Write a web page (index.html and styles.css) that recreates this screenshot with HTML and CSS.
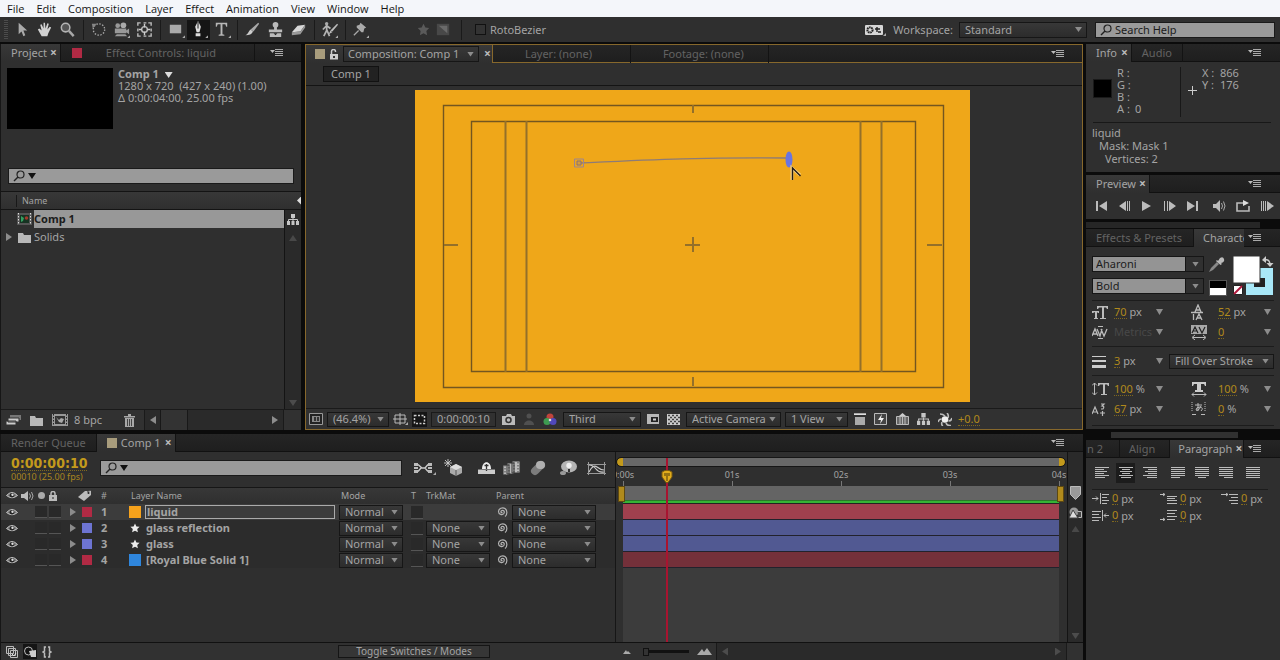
FILE: index.html
```html
<!DOCTYPE html>
<html lang="en">
<head>
<meta charset="utf-8">
<title>Comp 1</title>
<link rel="stylesheet" href="styles.css">
</head>
<body>
<svg class="defs" aria-hidden="true">
  <symbol id="menu" viewBox="0 0 14 8"><path d="M0 1h5L2.500 4z" fill="#bbb"/><path d="M5 .5h8M5 2.500h8M5 4.500h8M5 6.500h8" stroke="#aaa"/></symbol>
  <symbol id="lens" viewBox="0 0 12 12"><circle cx="7.500" cy="4.500" r="3.500" fill="none" stroke="#222" stroke-width="1.200"/><path d="M5 7L1 11" stroke="#222" stroke-width="1.500"/></symbol>
  <symbol id="eye" viewBox="0 0 12 9"><path d="M.5 4.500Q6-1.500 11.500 4.500Q6 9 .5 4.500z" fill="#777" stroke="#c4c4c4"/><circle cx="6" cy="4.300" r="2.300" fill="#222"/><circle cx="6.500" cy="3.800" r="1.200" fill="#ddd"/></symbol>
  <symbol id="star" viewBox="0 0 10 10"><path d="M5 .5l1.400 2.900 3.200.4-2.400 2.200.7 3.300L5 7.700 2.100 9.300l.7-3.300L.4 3.800l3.200-.4z" fill="#ececec"/></symbol>
  <symbol id="swirl" viewBox="0 0 12 12"><path d="M6.500 6.500c-1 .7-2.300-.7-1-1.800C7 3.500 9 5.200 8 7.200 6.500 9.600 2.500 8.600 2.500 5.600 2.500 2.500 6.500.8 9 2.500c2.500 1.800 2.500 6 0 8" fill="none" stroke="#b4b4b4" stroke-width="1.200"/></symbol>
  <symbol id="flow" viewBox="0 0 12 11"><path d="M4 0h4v4H4zM0 7h3v4H0zM4.500 7h3v4h-3zM9 7h3v4H9z" fill="#c6c6c6"/><path d="M6 4v3M1.500 7V5.500h9V7" fill="none" stroke="#c6c6c6"/></symbol>
  <symbol id="tip" viewBox="0 0 4 4"><path d="M4 0v4H0z" fill="#aaa"/></symbol>
  <symbol id="folder" viewBox="0 0 13 11"><path d="M0 1h5l1 2h7v8H0z" fill="#b8b8b8"/></symbol>
</svg>

<nav class="menubar">
  <button>File</button><button>Edit</button><button>Composition</button><button>Layer</button><button>Effect</button><button>Animation</button><button>View</button><button>Window</button><button>Help</button>
</nav>

<header class="toolbar">
  <i class="handle"></i>
  <div class="tools">
    <button aria-label="Selection"><svg viewBox="0 0 20 20"><path d="M7 3v12l3-3 2 5 2-1-2-5h4z" fill="#aaa"/></svg></button>
    <button aria-label="Hand"><svg viewBox="0 0 20 20"><path d="M7 17L3 10l1.500-1L7 11 5.500 5 7 4.500 9 9 9 3h1.500L11 9l2-5.500 1.500.5-1.500 6 2.500-3 1.500 1-3 6-1 3z" fill="#d2d2d2"/></svg></button>
    <button aria-label="Zoom"><svg viewBox="0 0 20 20"><circle cx="8" cy="8" r="4.500" fill="#555" stroke="#b4b4b4" stroke-width="1.600"/><path d="M11.500 11.500L16.500 17" stroke="#a8a8a8" stroke-width="2.600"/></svg></button>
  </div>
  <div class="tools">
    <button aria-label="Rotation"><svg viewBox="0 0 20 20"><circle cx="10.500" cy="10" r="6" fill="none" stroke="#aaa" stroke-width="1.400" stroke-dasharray="1.500 1.600"/><path d="M3 4l5 0-4 5z" fill="#888"/></svg></button>
    <button aria-label="Camera"><svg viewBox="0 0 20 20"><circle cx="6" cy="6" r="2.500" fill="#999"/><circle cx="12" cy="5.500" r="3" fill="#aaa"/><path d="M3 9h12v5H3zM15 11l3-2v6l-3-2zM5 15h9l2 2H3z" fill="#999"/><use href="#tip" x="16" y="16" width="3" height="3"/></svg></button>
    <button aria-label="Pan Behind"><svg viewBox="0 0 20 20"><path d="M3 6V3h3M9 3h3M14 3h3v3M17 9v3M17 14v3h-3M12 17H9M6 17H3v-3M3 12V9" fill="none" stroke="#bbb" stroke-width="1.500"/><circle cx="10" cy="10" r="3" fill="none" stroke="#bbb" stroke-width="1.500"/><path d="M10 4v4M10 12v4M4 10h3M13 10h3" stroke="#ccc" stroke-width="1.500"/></svg></button>
  </div>
  <div class="tools">
    <button aria-label="Rectangle"><svg viewBox="0 0 20 20"><path d="M4 5h12v9H4z" fill="#aaa"/><use href="#tip" x="17" y="16" width="3" height="3"/></svg></button>
    <button class="on" aria-label="Pen"><svg viewBox="0 0 20 20"><path d="M9.500 1l3 6-1.500 6H8L6.500 7zM7 14h5v3H7z" fill="#ddd"/><path d="M9.500 2v7" stroke="#111"/><use href="#tip" x="17" y="16" width="3" height="3"/></svg></button>
    <button aria-label="Type"><svg viewBox="0 0 20 20"><path d="M4 3h12v4h-1l-1-2.500h-3V15l2 .5v1H7v-1l2-.5V4.500H6L5 7H4z" fill="#b8b8b8"/><use href="#tip" x="17" y="16" width="3" height="3"/></svg></button>
  </div>
  <div class="tools">
    <button aria-label="Brush"><svg viewBox="0 0 20 20"><path d="M16 3l1 1-6 8-3-2z" fill="#aaa"/><path d="M8 10l2.500 2c-1 3-4 4-8 4 3-1 3-4 5.500-6z" fill="#ccc"/></svg></button>
    <button aria-label="Clone Stamp"><svg viewBox="0 0 20 20"><circle cx="10" cy="5" r="3" fill="#bbb"/><path d="M8.500 6h3v4H17v3H3v-3h5.500zM4 14h12v4H4z" fill="#bbb"/><path d="M8 14l2 2 2-2z" fill="#222"/></svg></button>
    <button aria-label="Eraser"><svg viewBox="0 0 20 20"><path d="M9 6l8-1-5 7-9 1z" fill="#d8d8d8"/><path d="M3 13l9-1v3l-9 1zM12 12l5-7v3l-5 7z" fill="#999"/></svg></button>
  </div>
  <div class="tools">
    <button aria-label="Roto Brush"><svg viewBox="0 0 20 20"><circle cx="7" cy="4" r="1.800" fill="#aaa"/><path d="M7 6v5l-3 6M7 10l3 7M3 10l4-4 4 3" fill="none" stroke="#b4b4b4" stroke-width="1.800"/><path d="M18 4l1 1-6 7-2-1zM11 11l2 2-4 2z" fill="#bbb"/><use href="#tip" x="16" y="16" width="3" height="3"/></svg></button>
  </div>
  <div class="tools pin">
    <button aria-label="Puppet Pin"><svg viewBox="0 0 20 20"><path d="M10 3l6 5-2 1-1 4-2 0-5-5 0-2 3-1z" fill="#aaa"/><path d="M8 11l-5 5" stroke="#aaa" stroke-width="1.300"/><use href="#tip" x="16" y="16" width="3" height="3"/></svg></button>
  </div>
  <div class="tools dim">
    <button aria-label="Shape"><svg viewBox="0 0 20 20"><path d="M10 4l2 4 4 .5-3 3 .8 4.500-3.800-2-3.800 2 .8-4.500-3-3L8 8z" fill="#5a5a5a"/></svg></button>
    <button aria-label="Mask"><svg viewBox="0 0 20 20"><path d="M3 4h13v12H3z" fill="#484848"/><path d="M5 6h9v8z" fill="#6a6a6a"/></svg></button>
  </div>
  <label class="check"><input type="checkbox">RotoBezier</label>
  <span class="grow"></span>
  <svg class="gearbox" width="21" height="12" viewBox="0 0 21 12"><rect width="18" height="10" y="1" rx="1" fill="#d6d6d6"/><circle cx="5" cy="6" r="2.600" fill="none" stroke="#222" stroke-width="2" stroke-dasharray="1.600 .6"/><path d="M10 5h5M12 3v5M13 8h3" stroke="#222" stroke-width="1.400"/><use href="#tip" x="18" y="9" width="3" height="3"/></svg>
  <label for="ws">Workspace:</label>
  <span class="sel ws"><select id="ws"><option>Standard</option></select></span>
  <label class="field help"><svg width="12" height="12"><use href="#lens"/></svg><input type="search" placeholder="Search Help" aria-label="Search Help"></label>
</header>

<main class="desk">
  <div class="main">
    <div class="upper">
      <section class="panel project">
        <div class="tabs">
          <button class="tab on">Project <b>×</b></button>
          <button class="tab effects"><i class="chip red"></i>Effect Controls: liquid</button>
          <button class="pmenu" aria-label="Panel menu"><svg width="14" height="8"><use href="#menu"/></svg></button>
        </div>
        <div class="preview">
          <div class="thumb"></div>
          <p><strong>Comp 1 <i class="down light"></i></strong><br>1280 x 720 &nbsp;(427 x 240) (1.00)<br>Δ 0:00:04:00, 25.00 fps</p>
        </div>
        <label class="field find"><svg width="12" height="12"><use href="#lens"/></svg><i class="down dark"></i><input type="search" aria-label="Search project"></label>
        <div class="colhead"><span>Name</span><i class="left light"></i></div>
        <div class="files">
          <div class="list">
            <button class="file on"><span class="pre"></span><svg width="16" height="12"><path d="M0 0h15v12H0z" fill="#555"/><path d="M1.500 0v12M13.500 0v12" stroke="#ddd" stroke-dasharray="1.500 1.500"/><path d="M3 2h9v8H3z" fill="#163322"/><path d="M4 3l3 2-1 3-2 1z" fill="#35a060"/><circle cx="9.500" cy="5" r="1.800" fill="#a33a2c"/></svg><span class="fname">Comp 1</span></button>
            <button class="file"><span class="pre"><i class="right"></i></span><svg width="13" height="11"><use href="#folder"/></svg><span class="fname">Solids</span></button>
          </div>
          <div class="vbar"><svg width="12" height="11"><use href="#flow"/></svg><i class="up"></i><span class="grow"></span><i class="down faint"></i></div>
        </div>
        <div class="foot pfoot">
          <button aria-label="Interpret footage"><svg width="15" height="12"><path d="M4 1h11v5H4z" fill="#777"/><path d="M2 4h11v4H2zM0 7h10v4H0z" fill="#ccc" stroke="#333"/></svg></button>
          <button aria-label="New folder"><svg width="13" height="11"><use href="#folder"/></svg></button>
          <button aria-label="New composition"><svg width="16" height="12"><path d="M0 0h16v12H0z" fill="#999"/><path d="M1.500 0v12M14.500 0v12" stroke="#222" stroke-dasharray="1.500 1.500"/><path d="M3 2h10v8H3z" fill="#333"/><path d="M4 3l3 3 2-2 3 1-2 4-3-1z" fill="#aaa"/></svg></button>
          <button class="bpc">8 bpc</button>
          <button aria-label="Delete"><svg width="11" height="13"><path d="M0 2h11v1.500H0zM4 0h3v2H4zM1 4h9v9H1z" fill="#a8a8a8"/><path d="M3.500 5v7M5.500 5v7M7.500 5v7" stroke="#444"/></svg></button>
          <div class="hbar"><i class="left"></i><span class="knob"></span><span class="grow"></span><i class="right"></i></div>
        </div>
      </section>

      <section class="panel comp">
        <div class="tabs">
          <div class="tab on"><i class="chip tan"></i><svg width="8" height="11"><path d="M1.500 5V2.500a2 2 0 0 1 4 0V3" fill="none" stroke="#ccc" stroke-width="1.500"/><path d="M0 5h8v5.500H0z" fill="#ccc"/><path d="M3 7h2v2H3z" fill="#333"/></svg><span class="sel"><select aria-label="Viewer"><option>Composition: Comp 1</option></select></span><b>×</b></div>
          <button class="tab wide">Layer: (none)</button>
          <button class="tab wide">Footage: (none)</button>
          <button class="pmenu" aria-label="Panel menu"><svg width="14" height="8"><use href="#menu"/></svg></button>
        </div>
        <div class="crumbs"><button>Comp 1</button></div>
        <div class="viewer">
          <svg class="canvas" viewBox="0 0 555 312" role="img" aria-label="Composition preview">
            <rect width="555" height="312" fill="#efa719"/>
            <g fill="none" stroke="#735620" stroke-width="1.400">
              <path d="M28.500 15.500h500v282h-500zM56.500 31.500h444v250h-444z"/>
              <path d="M90.500 31v251M111.500 31v251M445.500 31v251M466.500 31v251M278 15v8M278 287v9M29 155h14M512 155h15M270 155h15M278 147v15" stroke="#94702a" stroke-width="2"/>
            </g>
            <path d="M164 73C230 70 290 67 373 68" fill="none" stroke="#8d7b77" stroke-width="1.300"/>
            <path d="M159.500 69h9v8h-9z" fill="none" stroke="#9c8590"/><path d="M162 71h4v4h-4z" fill="#d49b3c" stroke="#86727b"/>
            <ellipse cx="374" cy="69.500" rx="3.500" ry="8" fill="#6a75df"/>
            <path d="M377 90V78l8 7" fill="none" stroke="#f5d38c" stroke-width="3"/><path d="M377.500 90V78l8 8" fill="none" stroke="#241c14" stroke-width="1.400"/>
          </svg>
        </div>
        <div class="foot cfoot">
          <svg width="14" height="12"><path d="M.5.500h13v11H.5z" fill="#222" stroke="#999"/><path d="M3 3h8v6H3z" fill="#888"/><path d="M5 4h2v4H5zM8 4h2v4H8z" fill="#333"/></svg>
          <span class="sel zoomsel"><select aria-label="Zoom"><option>(46.4%)</option></select></span>
          <svg width="15" height="12"><path d="M2 2h10v8H2zM7 0v12M0 6h14" fill="none" stroke="#bbb"/><use href="#tip" x="12" y="9" width="3" height="3"/></svg>
          <span class="inset"><svg width="13" height="11"><path d="M1.500 1.500h10v8h-10z" fill="none" stroke="#ccc" stroke-width="1.500" stroke-dasharray="2 1.500"/></svg></span>
          <button class="boxed">0:00:00:10</button>
          <svg width="13" height="11"><path d="M0 2h4l1-2h4l1 2h3v9H0z" fill="#bbb"/><circle cx="6.500" cy="6" r="2.500" fill="none" stroke="#333" stroke-width="1.500"/></svg>
          <svg width="12" height="12"><circle cx="6" cy="3" r="2.500" fill="#505050"/><path d="M1 12c0-6 10-6 10 0z" fill="#505050"/></svg>
          <svg width="14" height="13"><circle cx="7" cy="4" r="3.500" fill="#c0443c"/><circle cx="4" cy="8.500" r="3.500" fill="#3e9c50"/><circle cx="10" cy="8.500" r="3.500" fill="#5048ba"/><circle cx="7" cy="7" r="1.300" fill="#ddd"/></svg>
          <span class="sel third"><select aria-label="Resolution"><option>Third</option></select></span>
          <svg width="12" height="10"><path d="M0 0h12v10H0z" fill="#b8b8b8"/><path d="M4 3h7v5H4z" fill="#222"/><path d="M6 4.500h3v2H6z" fill="#ccc"/></svg>
          <svg width="13" height="11"><path d="M0 0h13v11H0z" fill="#ccc"/><path d="M1 1.500h12M1 5.500h12M1 9.500h12" stroke="#444" stroke-width="1.600" stroke-dasharray="2 2"/><path d="M3 3.500h10M3 7.500h10" stroke="#444" stroke-width="1.600" stroke-dasharray="2 2"/></svg>
          <span class="sel camera"><select aria-label="3D view"><option>Active Camera</option></select></span>
          <span class="sel view"><select aria-label="View layout"><option>1 View</option></select></span>
          <svg width="12" height="12"><path d="M0 0h12v2H0zM1 4h10v8H1z" fill="#aaa"/><path d="M0 1.500h12" stroke="#ddd"/></svg>
          <svg width="14" height="12"><path d="M.5.500h12v11H.5z" fill="#444" stroke="#bbb"/><path d="M8 1L4 7h3l-1 4 4-6H7z" fill="#eee"/></svg>
          <svg width="13" height="12"><path d="M.5 3.500h12v8H.5zM4 3v8M6.500 2v9M9 3v8" fill="#666" stroke="#bbb"/><path d="M3 3l3.500-3L10 3z" fill="#ccc"/></svg>
          <svg width="13" height="12"><use href="#flow"/></svg>
          <svg width="14" height="13"><path d="M7 3Q5 1 2 1M10 5q1-3-1-5M10.500 8q3 0 3.500-3M8 10q1 3 5 2.500M4 9q-1 3 1 4M3.500 6Q1 6 0 9" fill="none" stroke="#bbb" stroke-width="1.600"/><circle cx="7" cy="6.500" r="3.300" fill="#f0f0f0"/></svg>
          <button class="hot">+0.0</button>
        </div>
      </section>
    </div>

    <section class="panel timeline">
      <div class="tabs">
        <button class="tab rq">Render Queue</button>
        <button class="tab on"><i class="chip tan"></i>Comp 1 <b>×</b></button>
        <button class="pmenu" aria-label="Panel menu"><svg width="14" height="8"><use href="#menu"/></svg></button>
      </div>
      <div class="tbody">
        <div class="layers">
          <div class="thead">
            <div class="clock"><button class="time">0:00:00:10</button><small>00010 (25.00 fps)</small></div>
            <label class="field find"><svg width="12" height="12"><use href="#lens"/></svg><i class="down dark"></i><input type="search" aria-label="Search layers"></label>
            <div class="switches">
              <svg width="23" height="14"><path d="M1 2h4v3H1zM1 6h4v2H1zM1 9h4v3H1zM15 2h4v3h-4zM15 6h4v2h-4zM15 9h4v3h-4z" fill="#bbb"/><path d="M5 3.500l4 3.500 3 0 3-3.500M5 10.500L8 7M12 7l3 3.500" fill="none" stroke="#ccc" stroke-width="1.300"/><use href="#tip" x="20" y="11" width="3" height="3"/></svg>
              <svg class="draft" width="20" height="18"><path d="M4 0v8M0 4h8M1 1l6 6M7 1L1 7" stroke="#ccc" stroke-width=".9"/><path d="M6 8l6-3 6 3v6l-6 3-6-3z" fill="#aaa"/><path d="M6 8l6-3 6 3-6 3z" fill="#ddd"/><path d="M12 11v6" stroke="#555"/></svg>
              <svg width="17" height="14"><path d="M0 8h17v5H0z" fill="#ccc"/><path d="M4 8c0-9 9-9 9 0z" fill="#eee"/><path d="M8.500 3v7M6.500 4.500h4" stroke="#333" stroke-width="1.300"/><path d="M0 8.500h17" stroke="#777"/></svg>
              <svg width="18" height="16"><path d="M0 5h6v10H0zM4 3h7v11H4zM9 1h8v12H9z" fill="#bbb" stroke="#333"/><path d="M2 5v10M6 4v10M11 2v11M15 2v11" stroke="#444" stroke-dasharray="1.500 1.500"/></svg>
              <svg class="blur" width="18" height="16"><g stroke-linecap="round"><path d="M6 11l6-6" stroke="#7c7c7c" stroke-width="8"/><path d="M11 5l1 0" stroke="#b0b0b0" stroke-width="8"/></g></svg>
              <svg width="20" height="17"><ellipse cx="10" cy="6.500" rx="8" ry="6" fill="#b4b4b4"/><ellipse cx="4" cy="13" rx="3" ry="2" fill="#999"/><circle cx="10" cy="5.500" r="2.700" fill="#eee"/><path d="M9 9h2v3H9z" fill="#333"/></svg>
              <svg width="19" height="15"><path d="M1.500 1v13M17.500 1v13M0 3.500h19M0 12.500h19" stroke="#999"/><path d="M2 4Q6 4 9 8t8 3M2 11Q6 3 10 6t7 3" fill="none" stroke="#ccc" stroke-width="1.200"/></svg>
            </div>
          </div>
          <table>
            <colgroup><col class="c-av"><col class="c-tag"><col class="c-num"><col class="c-name"><col class="c-mode"><col class="c-t"><col class="c-trk"><col></colgroup>
            <thead><tr>
              <th><span class="av"><svg width="12" height="9"><use href="#eye"/></svg><svg width="13" height="10"><path d="M0 3h3l4-3v10L3 7H0z" fill="#bbb"/><path d="M8.500 2.500q2 2.500 0 5M10.500 1q3 4 0 8" fill="none" stroke="#aaa"/></svg><svg width="9" height="9"><circle cx="4.500" cy="4.500" r="3.500" fill="#aaa"/></svg><svg width="8" height="10"><path d="M2 4V2.500a2 2 0 0 1 4 0V4" fill="none" stroke="#bbb" stroke-width="1.500"/><path d="M0 4h8v6H0z" fill="#bbb"/><path d="M3.500 6h1v2h-1z" fill="#222"/></svg></span></th>
              <th><svg class="taghead" width="14" height="11"><path d="M0 7l7-6 6 0 0 4-7 6z" fill="#bbb"/><path d="M9 2l4-2" stroke="#555"/><circle cx="10.500" cy="3" r="1" fill="#222"/></svg></th>
              <th>#</th><th>Layer Name</th><th>Mode</th><th>T</th><th>TrkMat</th><th>Parent</th>
            </tr></thead>
            <tbody>
              <tr class="on"><td><span class="av"><svg width="12" height="9"><use href="#eye"/></svg><i></i><i></i></span></td><td><span class="tag"><i class="right"></i><i class="chip red"></i></span></td><td>1</td><td><span class="lname"><i class="chip amber"></i><span class="edit">liquid</span></span></td><td><span class="sel"><select aria-label="Mode 1"><option>Normal</option></select></span></td><td><i class="slot"></i></td><td></td><td><span class="parent"><svg width="12" height="12"><use href="#swirl"/></svg><span class="sel"><select aria-label="Parent 1"><option>None</option></select></span></span></td></tr>
              <tr><td><span class="av"><svg width="12" height="9"><use href="#eye"/></svg><i></i><i></i></span></td><td><span class="tag"><i class="right"></i><i class="chip blue"></i></span></td><td>2</td><td><span class="lname"><svg width="12" height="10"><use href="#star"/></svg><span>glass reflection</span></span></td><td><span class="sel"><select aria-label="Mode 2"><option>Normal</option></select></span></td><td><i class="slot"></i></td><td><span class="sel"><select aria-label="Track matte 2"><option>None</option></select></span></td><td><span class="parent"><svg width="12" height="12"><use href="#swirl"/></svg><span class="sel"><select aria-label="Parent 2"><option>None</option></select></span></span></td></tr>
              <tr><td><span class="av"><svg width="12" height="9"><use href="#eye"/></svg><i></i><i></i></span></td><td><span class="tag"><i class="right"></i><i class="chip blue"></i></span></td><td>3</td><td><span class="lname"><svg width="12" height="10"><use href="#star"/></svg><span>glass</span></span></td><td><span class="sel"><select aria-label="Mode 3"><option>Normal</option></select></span></td><td><i class="slot"></i></td><td><span class="sel"><select aria-label="Track matte 3"><option>None</option></select></span></td><td><span class="parent"><svg width="12" height="12"><use href="#swirl"/></svg><span class="sel"><select aria-label="Parent 3"><option>None</option></select></span></span></td></tr>
              <tr><td><span class="av"><svg width="12" height="9"><use href="#eye"/></svg><i></i><i></i></span></td><td><span class="tag"><i class="right"></i><i class="chip red"></i></span></td><td>4</td><td><span class="lname"><i class="chip royal"></i><span>[Royal Blue Solid 1]</span></span></td><td><span class="sel"><select aria-label="Mode 4"><option>Normal</option></select></span></td><td><i class="slot"></i></td><td><span class="sel"><select aria-label="Track matte 4"><option>None</option></select></span></td><td><span class="parent"><svg width="12" height="12"><use href="#swirl"/></svg><span class="sel"><select aria-label="Parent 4"><option>None</option></select></span></span></td></tr>
            </tbody>
          </table>
        </div>
        <div class="lanes">
          <div class="range"></div>
          <div class="ruler"><span>0:00s</span><span>01s</span><span>02s</span><span>03s</span><span>04s</span></div>
          <div class="work"></div>
          <div class="tracks">
            <div class="bar b-on"></div><div class="bar b-blue"></div><div class="bar b-blue"></div><div class="bar b-red"></div>
          </div>
          <div class="playhead"><svg width="12" height="14"><path d="M1 2q5-3.500 10 0v5L7 12.500H5L1 7z" fill="#e0ac1c" stroke="#7b5a10"/><path d="M4 3v3M6 3v8M8 3v3" stroke="#4c3808"/></svg></div>
        </div>
        <div class="vbar tbar"><svg width="11" height="14"><path d="M.5.500h10v8l-5 5-5-5z" fill="#999" stroke="#bbb"/></svg><svg width="13" height="12"><circle cx="5" cy="5" r="4.500" fill="#999"/><path d="M4 3l5 8H0z" fill="#ddd" stroke="#444"/><path d="M8.500 4.500h4v6h-3" fill="#444" stroke="#bbb"/></svg><i class="up"></i><span class="grow"></span><i class="down faint"></i></div>
      </div>
      <div class="foot tfoot">
        <div class="tleft">
          <svg width="12" height="12"><path d="M.5.500h7v7h-7zM2.500 2.500h7v7h-7zM4.500 4.500h7v7h-7z" fill="#333" stroke="#bbb"/><path d="M6 8l2 2 2-3" fill="none" stroke="#ddd"/></svg>
          <span class="inset"><svg width="12" height="12"><circle cx="4.500" cy="5" r="4" fill="none" stroke="#bbb"/><path d="M5 5l7-1v7H7z" fill="#ccc"/></svg></span>
          <svg width="10" height="12"><path d="M4 1H2.500v4L1 6l1.500 1v4H4M6 1h1.500v4L9 6 7.500 7v4H6" fill="none" stroke="#bbb" stroke-width="1.500"/></svg>
          <button class="toggle">Toggle Switches / Modes</button>
        </div>
        <div class="tright">
          <svg width="8" height="5"><path d="M0 5l3-4 1 2 1-1 3 3z" fill="#aaa"/></svg>
          <input type="range" value="0" aria-label="Timeline zoom">
          <svg width="15" height="8"><path d="M0 7l5-6 2 3 3-4 5 7z" fill="#aaa"/></svg>
          <div class="hbar"><i class="left faint"></i><span class="grow"></span><i class="right faint"></i></div>
        </div>
      </div>
    </section>
  </div>

  <aside class="side">
    <section class="panel info">
      <div class="tabs"><button class="tab on">Info <b>×</b></button><button class="tab audio">Audio</button><button class="pmenu" aria-label="Panel menu"><svg width="14" height="8"><use href="#menu"/></svg></button></div>
      <div class="infobox">
        <div class="swatch"></div>
        <dl><dt>R :</dt><dd></dd><dt>G :</dt><dd></dd><dt>B :</dt><dd></dd><dt>A :</dt><dd>0</dd></dl>
        <svg width="9" height="9"><path d="M4.500 0v9M0 4.500h9" stroke="#ccc"/></svg>
        <dl class="xy"><dt>X :</dt><dd>866</dd><dt>Y :</dt><dd>176</dd></dl>
      </div>
      <p class="note"><span>liquid</span><span>Mask: Mask 1</span><span>Vertices: 2</span></p>
    </section>

    <section class="panel play">
      <div class="tabs"><button class="tab on">Preview <b>×</b></button><button class="pmenu" aria-label="Panel menu"><svg width="14" height="8"><use href="#menu"/></svg></button></div>
      <div class="transport">
        <button aria-label="First frame"><svg width="12" height="10"><path d="M0 0h2v10H0zM11 0v10L3 5z" fill="#bbb"/></svg></button>
        <button aria-label="Previous frame"><svg width="12" height="10"><path d="M7 0v10L0 5zM8 0h1v10H8zM10 0h1v10h-1z" fill="#bbb"/></svg></button>
        <button aria-label="Play"><svg width="12" height="10"><path d="M1 0l9 5-9 5z" fill="#bbb"/></svg></button>
        <button aria-label="Next frame"><svg width="12" height="10"><path d="M5 0v10l7-5zM0 0h1v10H0zM3 0h1v10H3z" fill="#bbb"/></svg></button>
        <button aria-label="Last frame"><svg width="12" height="10"><path d="M10 0h2v10h-2zM1 0v10l8-5z" fill="#bbb"/></svg></button>
        <button class="snd" aria-label="Audio"><svg width="13" height="12"><path d="M0 4h3l4-4v12L3 8H0z" fill="#bbb"/><path d="M8.500 3q2 3 0 6M10.500 1.500q3 4.500 0 9" fill="none" stroke="#aaa"/></svg></button>
        <button aria-label="Loop"><svg width="14" height="12"><path d="M7 3H1v8h12V6" fill="none" stroke="#bbb" stroke-width="1.600"/><path d="M7 0l6 3-6 3z" fill="#ddd"/></svg></button>
        <button aria-label="RAM preview"><svg width="13" height="10"><path d="M.5 0v10M2.500 0v10M4.500 0v10" stroke="#bbb"/><path d="M6 0v10l7-5z" fill="#bbb"/></svg></button>
      </div>
    </section>

    <div class="strip s1"></div>
    <section class="panel char">
      <div class="tabs"><button class="tab presets">Effects &amp; Presets</button><button class="tab on clip">Character</button><button class="pmenu" aria-label="Panel menu"><svg width="14" height="8"><use href="#menu"/></svg></button></div>
      <div class="fontrow">
        <div class="fonts">
          <span class="sel pale"><select aria-label="Font"><option>Aharoni</option></select></span>
          <span class="sel pale"><select aria-label="Font style"><option>Bold</option></select></span>
        </div>
        <svg width="66" height="42"><path d="M12 2q3-2 4 1t-3 4l1 1-1.500 1L8 5l1-1 1 1z" fill="#bbb"/><path d="M9 6l2 2-6 6-4 2 2-4z" fill="#888"/><path d="M1.500 24.500h17v15h-17z" fill="#fff" stroke="#555"/><path d="M2 25h16v7H2z" fill="#000"/><path d="M38 12h27v27H38z" fill="#a9e8f8"/><path d="M46 22h11v9H46z" fill="#222"/><path d="M25 0h27v27H25z" fill="#fff" stroke="#333"/><path d="M25.500 29.500h9v9h-9z" fill="#fff" stroke="#222"/><path d="M26 38l8-8" stroke="#b0183c" stroke-width="2"/><path d="M57 4q5-1 5 5" fill="none" stroke="#ccc" stroke-width="1.500"/><path d="M54 4l4-4v7zM58.500 7h7L62 11z" fill="#ccc"/></svg>
      </div>
      <div class="props">
        <svg width="16" height="15"><path d="M5 1h11v3h-1l-1-1.500h-2V13h2v1H8v-1h2V2.500H7L6 4H5zM0 6h7v2H6L5 7v6h1v1H2v-1h1V7L1 8H0z" fill="#bbb"/></svg><span><button class="hot">70</button> px</span><i class="down mid"></i>
        <svg width="12" height="17"><path d="M4 8l3-7 3 7M5 6h4M2.500 10v6M5 16l3-6 3 6M6 14h4M0 8.500h12" fill="none" stroke="#bbb" stroke-width="1.300"/></svg><span><button class="hot">52</button> px</span><i class="down mid"></i>
        <svg width="16" height="15"><path d="M0 11l3-7 3 7M1 9h4M5 4l3 7 2-7M9 4l3 7 3-7" fill="none" stroke="#bbb" stroke-width="1.300"/><path d="M6 1.500h5M6 13.500h5" stroke="#bbb"/></svg><span class="off">Metrics</span><i class="down mid"></i>
        <svg width="16" height="15"><path d="M0 0h16v9H0z" fill="#a8a8a8"/><path d="M1 8l3-6 3 6M2 6h4M8 2l3 6 3-6" fill="none" stroke="#222" stroke-width="1.200"/><path d="M2 12.500h12M4 10l-3 2.500L4 15M12 10l3 2.500-3 2.500" fill="none" stroke="#bbb"/></svg><span><button class="hot">0</button></span><i class="down mid"></i>
      </div>
      <div class="props stroke">
        <svg width="14" height="13"><path d="M0 1.500h14" stroke="#ccc"/><path d="M0 6h14" stroke="#ccc" stroke-width="2"/><path d="M0 11.500h14" stroke="#ccc" stroke-width="3"/></svg><span><button class="hot">3</button> px</span><i class="down mid"></i>
        <span class="sel"><select aria-label="Stroke order"><option>Fill Over Stroke</option></select></span>
      </div>
      <div class="props last">
        <svg width="17" height="14"><path d="M2.500 1v12M0 3.500L2.500 1 5 3.500M0 10.500L2.500 13 5 10.500" fill="none" stroke="#bbb"/><path d="M6 1h11v3h-1l-1-1.500h-2V12h2v1H9v-1h2V2.500H8L7 4H6z" fill="#bbb"/></svg><span><button class="hot">100</button> %</span><i class="down mid"></i>
        <svg width="16" height="15"><path d="M1 0h14v4h-1l-1-2h-3v6h2v2H4V8h2V2H3L2 4H1z" fill="#ccc"/><path d="M1 12.500h14M3 10.500l-2 2 2 2M13 10.500l2 2-2 2" fill="none" stroke="#bbb"/></svg><span><button class="hot">100</button> %</span><i class="down mid"></i>
        <svg width="14" height="13"><path d="M0 11l3-7 3 7M1 9h4M9 1h3l-2 2q3 0 1 3H9M10.500 8v5M8 10h5" fill="none" stroke="#bbb" stroke-width="1.200"/></svg><span><button class="hot">67</button> px</span><i class="down mid"></i>
        <svg width="15" height="14"><path d="M1 0v10M14 0v10" stroke="#bbb" stroke-dasharray="1 1"/><path d="M4 3h7M7 1v8M10 4q-3 6-5 4 0-3 4-3 4 1 1 4M1 12.500h4M10 12.500h4" fill="none" stroke="#bbb"/></svg><span><button class="hot">0</button> %</span><i class="down mid"></i>
      </div>
    </section>

    <div class="strip s2"></div>
    <section class="panel para">
      <div class="tabs"><button class="tab cut">n 2</button><button class="tab align">Align</button><button class="tab on">Paragraph <b>×</b></button><button class="pmenu" aria-label="Panel menu"><svg width="14" height="8"><use href="#menu"/></svg></button></div>
      <div class="aligns">
        <button aria-label="Left"><svg width="14" height="12"><path d="M0 .5h14M0 2.500h9M0 4.500h12M0 6.500h9M0 8.500h14M0 10.500h10" stroke="#bbb"/></svg></button>
        <button class="on" aria-label="Center"><svg width="14" height="12"><path d="M0 .5h14M3 2.500h8M1 4.500h12M3 6.500h8M0 8.500h14M2 10.500h10" stroke="#bbb"/></svg></button>
        <button aria-label="Right"><svg width="14" height="12"><path d="M0 .5h14M5 2.500h9M2 4.500h12M5 6.500h9M0 8.500h14M4 10.500h10" stroke="#bbb"/></svg></button>
        <button class="jst" aria-label="Justify last left"><svg width="14" height="12"><path d="M0 .5h14M0 2.500h14M0 4.500h14M0 6.500h14M0 8.500h14M0 10.500h9" stroke="#bbb"/></svg></button>
        <button aria-label="Justify last centered"><svg width="14" height="12"><path d="M0 .5h14M0 2.500h14M0 4.500h14M0 6.500h14M0 8.500h14M3 10.500h8" stroke="#bbb"/></svg></button>
        <button aria-label="Justify last right"><svg width="14" height="12"><path d="M0 .5h14M0 2.500h14M0 4.500h14M0 6.500h14M0 8.500h14M5 10.500h9" stroke="#bbb"/></svg></button>
        <button class="all" aria-label="Justify all"><svg width="14" height="12"><path d="M0 .5h14M0 2.500h14M0 4.500h14M0 6.500h14M0 8.500h14M0 10.500h14" stroke="#bbb"/></svg></button>
      </div>
      <div class="indents">
        <span><svg width="17" height="11"><path d="M0 5.500h6M4 3.500l2 2-2 2M8.500 0v11M10 1.500h7M10 4.500h5M10 7.500h7M10 10.500h5" fill="none" stroke="#bbb"/></svg><button class="hot">0</button> px</span>
        <span><svg width="17" height="11"><path d="M0 1.500h5M3 0l2 1.500L3 3M7 3.500h10M7 5.500h8M7 7.500h10M7 10.500h10" fill="none" stroke="#bbb"/></svg><button class="hot">0</button> px</span>
        <span><svg width="17" height="11"><path d="M0 1.500h7M5 0l2 1.500L5 3M8 1.500h9M10 4.500h7M8 7.500h9M10 10.500h7" fill="none" stroke="#bbb"/></svg><button class="hot">0</button> px</span>
        <span><svg width="17" height="11"><path d="M0 1.500h9M0 4.500h7M0 7.500h9M0 10.500h7M10.500 0v11M12 5.500h5M14 3.500l-2 2 2 2" fill="none" stroke="#bbb"/></svg><button class="hot">0</button> px</span>
        <span><svg width="17" height="11"><path d="M0 9.500h5M3 8l2 1.500L3 11M7 .5h10M7 3.500h8M7 6.500h10M7 9.500h8" fill="none" stroke="#bbb"/></svg><button class="hot">0</button> px</span>
      </div>
    </section>
  </aside>
</main>
</body>
</html>
```
FILE: styles.css
```css
* { box-sizing: border-box; }
body {
  margin: 0;
  min-height: 100vh;
  display: flex;
  flex-direction: column;
  background: #0b0b0b;
  color: #a4a4a4;
  font: 11px/12px "Noto Sans", "Open Sans", sans-serif;
}
button, select, input { font: inherit; color: inherit; margin: 0; padding: 0; border: 0; background: none; min-width: 0; }
button { white-space: nowrap; }
p, dl, dd { margin: 0; }
svg { display: block; flex: none; }
.defs { position: absolute; width: 0; height: 0; }
.grow { flex: 1; }

/* small arrows */
.down, .up, .left, .right { display: inline-block; flex: none; background: #8c8c8c; }
.down { width: 8px; height: 6px; clip-path: polygon(0 0, 100% 0, 50% 100%); }
.up { width: 8px; height: 6px; background: #484848; clip-path: polygon(0 100%, 100% 100%, 50% 0); }
.left { width: 6px; height: 8px; clip-path: polygon(100% 0, 100% 100%, 0 50%); }
.right { width: 6px; height: 8px; clip-path: polygon(0 0, 0 100%, 100% 50%); }
.light { background: #ddd; }
.dark { background: #111; }
.faint { background: #4c4c4c; }
.mid { width: 7px; }

/* drop-downs */
.sel {
  display: grid;
  align-items: center;
  height: 15px;
  min-width: 0;
  border: 1px solid #161616;
  background: linear-gradient(#383838, #2c2c2c);
  color: #a4a4a4;
}
.sel select { grid-area: 1 / 1; width: 100%; height: 13px; padding: 0 14px 0 5px; appearance: none; line-height: 12px; outline: 0; }
.sel::after {
  content: "";
  grid-area: 1 / 1;
  justify-self: end;
  width: 7px;
  height: 5px;
  margin-right: 4px;
  background: #8c8c8c;
  clip-path: polygon(0 0, 100% 0, 50% 100%);
  pointer-events: none;
}
.sel.pale { background: linear-gradient(90deg, #949494 calc(100% - 18px), #151515 0, #151515 calc(100% - 17px), #303030 0); color: #1c1c1c; }
.sel.pale select { padding-left: 3px; }

/* text fields */
.field { display: flex; align-items: center; gap: 3px; height: 16px; padding: 0 4px; border: 1px solid #1a1a1a; background: #9a9a9a; color: #1c1c1c; }
.field input { flex: 1; outline: 0; }
.field input::placeholder { color: #1c1c1c; opacity: 1; }

.chip { width: 10px; height: 10px; flex: none; }
.red { background: #b12a44; }
.blue { background: #6d74d2; }
.tan { background: #a89c7c; }
.amber { background: #f6a21c; }
.royal { background: #2f86dd; }
.hot { color: #b18a1c; border-bottom: 1px dotted #80681e; line-height: 12px; }

/* menu bar */
.menubar { display: flex; gap: 12px; height: 17px; padding: 0 7px; background: #f4f6fa; color: #161616; font-family: "Open Sans", "Noto Sans", sans-serif; }

/* tool bar */
.toolbar { display: flex; align-items: center; height: 25px; padding: 0 5px 0 4px; background: #2f2f2f; }
.handle { width: 4px; height: 19px; margin-right: 2px; background: repeating-linear-gradient(#4c4c4c 0 1px, #2c2c2c 1px 2px); }
.tools { display: flex; padding-right: 4px; margin-right: 3px; border-right: 1px solid #1a1a1a; }
.tools button { display: grid; place-items: center; width: 23px; height: 20px; }
.tools svg { width: 19px; height: 19px; }
.tools .on { background: #151515; }
.tools.pin { border-color: transparent; }
.tools.dim { margin-left: 33px; padding-right: 8px; }
.tools.dim button { width: 20px; }
.check { display: flex; align-items: center; gap: 4px; margin-left: 10px; }
.check input { appearance: none; width: 11px; height: 11px; border: 1px solid #111; background: #333; }
.gearbox { margin-right: 7px; }
.toolbar .ws { width: 128px; margin: 0 8px 0 6px; height: 16px; }
.toolbar .help { width: 180px; }

/* desk */
.desk { flex: 1; display: flex; gap: 3px; padding-top: 2px; }
.main { flex: 1; min-width: 0; display: flex; flex-direction: column; gap: 4px; }
.upper { display: flex; gap: 4px; }
.side { width: 194px; flex: none; display: flex; flex-direction: column; }
.panel { display: flex; flex-direction: column; min-width: 0; background: #2f2f2f; }

.tabs { display: flex; height: 18px; flex: none; background: linear-gradient(#252525, #1e1e1e); box-shadow: inset 0 -1px #111; }
.tab { display: flex; align-items: center; gap: 4px; padding: 0 10px; color: #636363; border-right: 1px solid #131313; }
.tab.on { background: linear-gradient(#383838, #2f2f2f); color: #a4a4a4; padding-right: 3px; }
.tab b { font-size: 12px; color: #bbb; }
.pmenu { margin-left: auto; padding-right: 20px; }

/* project */
.project { width: 301px; flex: none; border-left: 1px solid #161616; }
.project .tab.on { gap: 3px; }
.project .effects { gap: 24px; padding: 0 38px 0 11px; }
.project .pmenu { padding-right: 17px; }
.preview { display: flex; gap: 5px; padding: 6px 6px 0; }
.preview p { line-height: 12px; }
.preview .down { margin-left: 3px; }
.thumb { width: 106px; height: 61px; background: #000; }
.project .find { margin: 39px 7px 0; }
.colhead { display: flex; justify-content: space-between; height: 19px; margin-top: 7px; padding-left: 15px; align-items: center; font-size: 9px; background: linear-gradient(#383838, #2f2f2f); border: solid #141414; border-width: 1px 0; }
.colhead span { padding-left: 5px; border-left: 1px solid #181818; }
.colhead .left { width: 4px; }
.files { flex: 1; display: flex; min-height: 0; }
.list { flex: 1; }
.file { display: flex; align-items: center; width: 100%; height: 18px; text-align: left; }
.file svg { width: 15px; margin-right: 2px; }
.fname { flex: 1; align-self: stretch; display: flex; align-items: center; }
.file.on .fname { background: #989898; color: #1c1c1c; font-weight: bold; }
.pre { width: 16px; padding-left: 5px; line-height: 8px; }
.vbar { width: 17px; display: flex; flex-direction: column; align-items: center; gap: 10px; padding: 4px 0 3px; border-left: 1px solid #141414; background: #2a2a2a; }
.foot { display: flex; align-items: center; height: 21px; flex: none; border-top: 1px solid #1a1a1a; background: #313131; }
.pfoot { gap: 9px; padding-left: 5px; }
.pfoot .bpc { margin: 0 13px 0 -3px; }
.hbar { flex: 1; display: flex; align-items: center; align-self: stretch; padding: 0 5px; background: #2a2a2a; border: 1px solid #1a1a1a; border-width: 0 1px; }
.pfoot .hbar { margin-right: 17px; }
.knob { width: 28px; align-self: stretch; margin-left: 4px; background: #333; border: solid #181818; border-width: 0 1px; }

/* composition */
.comp { flex: 1; border: 1px solid #87682c; }
.comp .tabs { box-shadow: inset 0 -1px #87682c; }
.comp .tab.on { gap: 5px; padding-left: 9px; padding-right: 1px; border-right-color: #87682c; }
.comp .tab .sel { width: 136px; height: 16px; }
.comp .tab select { padding-left: 4px; }
.comp .wide { width: 138px; padding-left: 32px; }
.comp .pmenu { padding-right: 17px; }
.crumbs { height: 23px; padding: 3px 17px 0; border-bottom: 1px solid #141414; }
.crumbs button { padding: 0 7px; height: 16px; background: #222; border: 1px solid #121212; }
.viewer { flex: 1; display: flex; justify-content: center; padding: 4px 3px 6px 0; }
.canvas { width: 555px; max-width: 100%; height: auto; align-self: flex-start; }
.cfoot { gap: 4px; padding-left: 3px; overflow: hidden; }
.zoomsel { width: 62px; }
.third { width: 78px; }
.camera { width: 95px; }
.view { width: 63px; }
.boxed { height: 15px; padding: 0 5px; border: 1px solid #1a1a1a; }
.boxed ~ svg { margin: 0 2px; }
.inset { display: grid; place-items: center; height: 15px; padding: 0 1px; background: #151515; }

/* timeline */
.timeline { flex: 1; border-left: 1px solid #161616; }
.timeline .pmenu { padding-right: 18px; }
.tbody { flex: 1; display: flex; }
.layers { width: 615px; flex: none; border-right: 1px solid #161616; }
.thead { display: flex; align-items: center; height: 35px; padding-bottom: 3px; }
.clock { width: 99px; padding: 2px 0 0 10px; }
.time { display: block; color: #c39a1c; font: bold 14px/14px "DejaVu Sans Condensed", "DejaVu Sans", sans-serif; border-bottom: 1px dotted #80681e; }
.clock small { display: block; font-size: 9px; line-height: 11px; color: #a88420; }
.thead .find { width: 302px; }
.switches { display: flex; align-items: center; gap: 8px; margin-left: 11px; }
.switches .draft { margin-right: 6px; }
.switches .blur { margin-right: 4px; }
table { width: 100%; table-layout: fixed; border-collapse: collapse; }
th, td { padding: 0; text-align: left; height: 16px; line-height: 12px; }
.c-av { width: 66px; }
.c-tag { width: 34px; }
.c-num { width: 28px; }
.c-name { width: 210px; }
.c-mode { width: 72px; }
.c-t { width: 15px; }
.c-trk { width: 66px; }
thead tr { background: linear-gradient(#383838, #2f2f2f); box-shadow: inset 0 1px #161616; }
th { height: 17px; font-size: 9px; font-weight: normal; }
tbody tr { background: #2c2c2c; }
tbody tr.on { background: #3c3c3c; }
td:nth-child(3), .lname { font-weight: bold; }
.av { display: flex; align-items: center; gap: 2px; padding-left: 5px; }
.av svg { margin-right: 1px; }
td .av i { width: 12px; height: 12px; background: #292929; border-bottom: 1px solid #555; }
td .av i:first-of-type { margin-left: 14px; }
.taghead { margin-left: 11px; }
.tag { display: flex; align-items: center; gap: 6px; padding-left: 3px; }
.lname { display: flex; align-items: center; gap: 4px; padding-right: 4px; }
.lname .chip { width: 12px; height: 12px; }
.lname span { flex: 1; line-height: 14px; padding-left: 1px; }
.lname .edit { line-height: 12px; border: 1px solid #aaa; padding-left: 1px; }
.slot { display: block; width: 12px; height: 13px; background: #292929; border-bottom: 1px solid #555; }
td .sel { width: 64px; }
.parent { display: flex; align-items: center; gap: 4px; padding-left: 4px; }
.parent .sel { width: 84px; }
th:nth-child(4), th:nth-child(5) { padding-left: 2px; }
th:nth-child(8) { padding-left: 4px; }

/* lanes */
.lanes { flex: 1; min-width: 0; position: relative; padding: 6px 8px 0 7px; display: flex; flex-direction: column; overflow: hidden; background: #2f2f2f; }
.range { height: 8px; margin: 0 -6px; border: solid #c39a1c; border-width: 0 6px; border-radius: 4px; background: #686868; outline: 1px solid #161616; }
.ruler { display: grid; grid-template-columns: repeat(4, 1fr) 0; height: 20px; padding-top: 3px; }
.ruler span { display: flex; flex-direction: column; align-items: center; width: 0; font-size: 9px; line-height: 11px; white-space: nowrap; }
.ruler span::after { content: ""; width: 1px; height: 5px; margin-top: 1px; background: #777; }
.work { height: 18px; margin: 0 -5px; border: solid #2f2f2f; border-width: 0 5px; background: linear-gradient(#646464 14px, #1c3c1c 14px, #35b435 15px, #35b435 17px, #222 17px); position: relative; }
.work::before, .work::after { content: ""; position: absolute; top: 0; width: 5px; height: 14px; background: #b08a1c; border: 1px solid #5c4812; }
.work::before { left: -5px; }
.work::after { right: -5px; }
.tracks { flex: 1; background: #3c3c3c; }
.bar { height: 16px; border-bottom: 1px solid #22222c; }
.b-on { background: #a0404e; }
.b-blue { background: #515992; }
.b-red { background: #74303a; }
.playhead { position: absolute; top: 0; bottom: 0; left: 10%; width: 12px; pointer-events: none; }
.playhead::before { content: ""; position: absolute; top: 6px; bottom: 0; left: 5px; width: 2px; background: #a81430; }
.playhead svg { position: relative; margin-top: 18px; }
.tbar { width: 16px; padding-top: 34px; gap: 7px; }

.tfoot { height: 18px; border-top-color: #111; }
.tleft { width: 616px; display: flex; align-items: center; gap: 5px; padding-left: 5px; }
.toggle { width: 152px; height: 13px; margin: 0 auto 0 281px; border: 1px solid #151515; font-size: 10px; line-height: 11px; background: #363636; }
.tright { flex: 1; display: flex; align-items: center; padding-left: 6px; }
.tright input { appearance: none; width: 46px; height: 3px; margin: 0 8px 0 12px; background: #111; }
.tright input::-webkit-slider-thumb { appearance: none; width: 6px; height: 8px; background: #333; border: 1px solid #111; }
.tright .hbar { margin: 0 16px 0 4px; height: 17px; }

/* info */
.info { height: 128px; margin-bottom: 3px; }
.infobox { display: flex; margin: 0 9px 0 7px; padding-top: 5px; height: 61px; border-bottom: 1px solid #181818; }
.swatch { width: 19px; height: 19px; margin: 12px 5px 0 0; background: #000; border: 1px solid #1a1a1a; }
.infobox dl { display: grid; grid-template-columns: 18px 45px; grid-auto-rows: 12px; height: 50px; border-right: 1px solid #181818; }
.infobox svg { margin: 19px 5px 0 7px; }
.infobox .xy { border: 0; }
.note { padding: 3px 6px; line-height: 13px; }
.note span { display: block; }
.note span:nth-child(2) { padding-left: 7px; }
.note span:nth-child(3) { padding-left: 13px; }

/* preview */
.play { height: 44px; }
.play .tab { gap: 3px; }
.transport { display: flex; align-items: center; height: 26px; padding: 0 6px 0 10px; justify-content: space-between; }
.transport .snd { margin-left: 4px; }

.strip { height: 10px; padding: 3px 0 1px; }
.strip::before { content: ""; display: block; height: 6px; background: #262626; }
.s1::before { margin-right: 20px; }
.s2 { height: 11px; }
.s2::before { margin: 0 42px 0 25px; background: #303030; }

/* character */
.presets { width: 108px; padding: 0 0 0 10px; }
.clip { width: 50px; overflow: hidden; border: 0; }
.char .tab.clip { padding: 0 0 0 9px; }
.side .pmenu { padding-right: 18px; }
.char { height: 200px; }
.fontrow { display: flex; gap: 4px; margin: 0 6px; padding-top: 9px; height: 54px; border-bottom: 1px solid #1c1c1c; }
.fonts { width: 112px; flex: none; display: grid; gap: 6px; align-content: start; }
.fonts .sel { height: 16px; }
.props { display: grid; grid-template-columns: 22px 42px 9px 26px 27px 1fr 10px; align-items: center; grid-auto-rows: 20px; margin: 0 6px; padding: 1px 0 4px; border-bottom: 1px solid #1c1c1c; white-space: nowrap; }
.props > :nth-child(6n + 4) { grid-column: 5; }
.props .off { color: #484848; }
.props.stroke { padding: 3px 0; grid-auto-rows: 22px; }
.props.stroke > .sel { grid-column: 4 / -1; margin-left: 4px; }
.props.last { padding: 3px 0 6px; }

/* paragraph */
.para { flex: 1; }
.cut { padding: 0 16px 0 1px; }
.align { padding: 0 14px 0 9px; }
.para .tab.on { padding: 0 1px 0 8px; gap: 3px; }
.aligns { display: flex; margin: 5px 12px 0 6px; padding-bottom: 6px; border-bottom: 1px solid #1c1c1c; }
.aligns button { display: grid; place-items: center; width: 19px; height: 20px; margin-right: 5px; }
.aligns .on { background: #1c1c1c; }
.aligns .jst { margin-left: 4px; }
.aligns .all { margin: 0 0 0 3px; }
.indents { display: grid; grid-template-columns: 68px 61px 1fr; grid-auto-rows: 17px; align-items: center; padding: 0 6px; white-space: nowrap; }
.indents span { display: flex; align-items: center; gap: 3px; }
```
